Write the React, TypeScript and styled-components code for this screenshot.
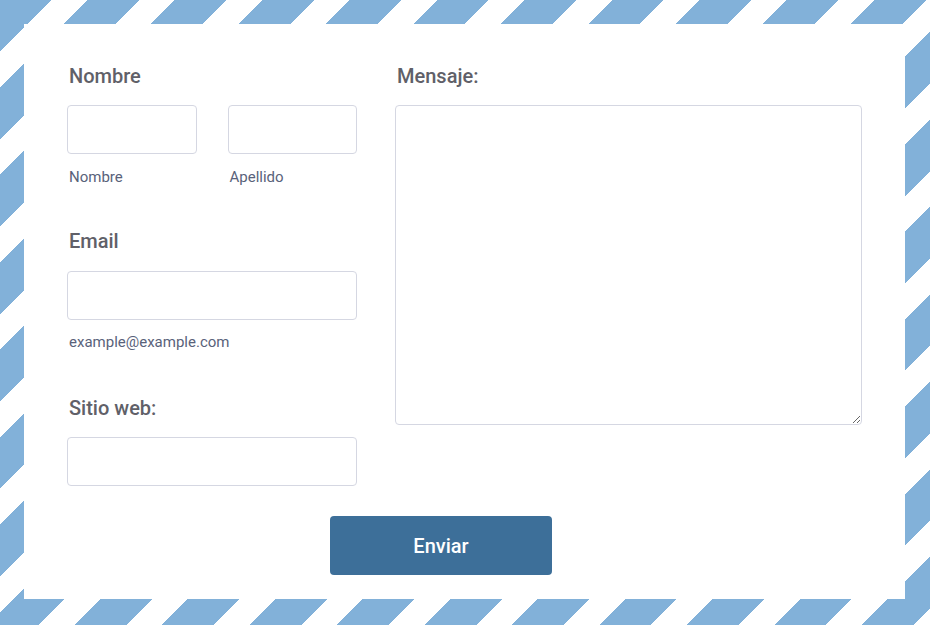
import React from "react";
import styled, { createGlobalStyle } from "styled-components";

const GlobalStyle = createGlobalStyle`
  html, body {
    margin: 0;
    padding: 0;
    background: #ffffff;
  }
  body {
    font-family: Roboto, "Liberation Sans", sans-serif;
  }
`;

const App: React.FC = () => {
  return (
    <>
      <GlobalStyle />
      <Envelope>
        <Card as="form" onSubmit={(e: React.FormEvent) => e.preventDefault()}>
          <Columns>
            <LeftColumn>
              <FieldGroup>
                <Label>Nombre</Label>
                <NameRow>
                  <NamePart>
                    <Input type="text" />
                    <SubLabel>Nombre</SubLabel>
                  </NamePart>
                  <NamePart>
                    <Input type="text" />
                    <SubLabel>Apellido</SubLabel>
                  </NamePart>
                </NameRow>
              </FieldGroup>
              <FieldGroup $top={43}>
                <Label $gap={18}>Email</Label>
                <Input type="email" />
                <SubLabel $gap={13}>example@example.com</SubLabel>
              </FieldGroup>
              <FieldGroup $top={45}>
                <Label>Sitio web:</Label>
                <Input type="url" />
              </FieldGroup>
            </LeftColumn>
            <RightColumn>
              <Label>Mensaje:</Label>
              <MessageBox />
            </RightColumn>
          </Columns>
          <ButtonRow>
            <SubmitButton type="submit">Enviar</SubmitButton>
          </ButtonRow>
        </Card>
      </Envelope>
    </>
  );
};

export default App;

const Envelope = styled.div`
  width: 930px;
  height: 625px;
  box-sizing: border-box;
  padding: 24px 25px 26px 24px;
  background: repeating-linear-gradient(
    135deg,
    #82b1d9 0px,
    #82b1d9 36.6px,
    #ffffff 36.6px,
    #ffffff 61.83px
  );
`;

const Card = styled.div`
  background: #ffffff;
  height: 100%;
  box-sizing: border-box;
  padding: 40px 43px 24px 43px;
  display: flex;
  flex-direction: column;
`;

const Columns = styled.div`
  display: flex;
  gap: 38px;
  align-items: flex-start;
`;

const LeftColumn = styled.div`
  width: 290px;
  display: flex;
  flex-direction: column;
`;

const RightColumn = styled.div`
  flex: 1;
  display: flex;
  flex-direction: column;
`;

const FieldGroup = styled.div<{ $top?: number }>`
  display: flex;
  flex-direction: column;
  margin-top: ${(p) => p.$top ?? 0}px;
`;

const Label = styled.label<{ $gap?: number }>`
  display: block;
  font-size: 20px;
  line-height: 24px;
  font-weight: 500;
  color: #606068;
  padding-left: 2px;
  margin-bottom: ${(p) => p.$gap ?? 17}px;
`;

const NameRow = styled.div`
  display: flex;
  gap: 31px;
`;

const NamePart = styled.div`
  display: flex;
  flex-direction: column;
  width: 130px;
`;

const Input = styled.input`
  display: block;
  width: 100%;
  height: 49px;
  box-sizing: border-box;
  border: 1px solid #d5d7e2;
  border-radius: 4px;
  background: #ffffff;
  padding: 0 10px;
  font-family: Roboto, "Liberation Sans", sans-serif;
  font-size: 15px;
  outline: none;
`;

const SubLabel = styled.span<{ $gap?: number }>`
  display: block;
  margin-top: ${(p) => p.$gap ?? 14}px;
  padding-left: 2px;
  font-size: 15px;
  line-height: 18px;
  color: #59627a;
`;

const MessageBox = styled.textarea`
  display: block;
  width: 100%;
  height: 320px;
  box-sizing: border-box;
  border: 1px solid #d5d7e2;
  border-radius: 4px;
  padding: 10px;
  font-family: Roboto, "Liberation Sans", sans-serif;
  font-size: 15px;
  outline: none;
`;

const ButtonRow = styled.div`
  margin-top: 30px;
  padding-left: 263px;
`;

const SubmitButton = styled.button`
  width: 222px;
  height: 59px;
  border: none;
  border-radius: 4px;
  background: #3d6f99;
  color: #ffffff;
  font-family: Roboto, "Liberation Sans", sans-serif;
  font-size: 20px;
  font-weight: 500;
  cursor: pointer;
`;
